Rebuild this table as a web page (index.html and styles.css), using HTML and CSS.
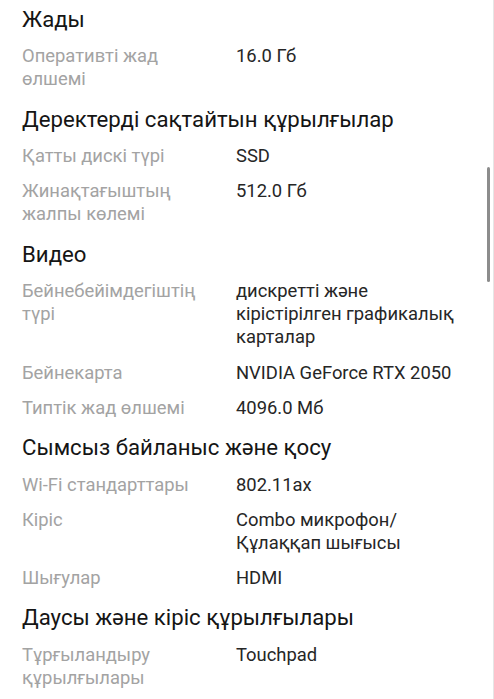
FILE: index.html
```html
<!DOCTYPE html>
<html lang="kk">
<head>
<meta charset="utf-8">
<title>Сипаттамалар</title>
<link rel="stylesheet" href="styles.css">
</head>
<body>
<main class="specs">
  <section class="section">
    <h2 class="heading">Жады</h2>
    <div class="row"><div class="label">Оперативті жад өлшемі</div><div class="value">16.0 Гб</div></div>
  </section>
  <section class="section">
    <h2 class="heading">Деректерді сақтайтын құрылғылар</h2>
    <div class="row"><div class="label">Қатты дискі түрі</div><div class="value">SSD</div></div>
    <div class="row"><div class="label">Жинақтағыштың жалпы көлемі</div><div class="value">512.0 Гб</div></div>
  </section>
  <section class="section">
    <h2 class="heading">Видео</h2>
    <div class="row"><div class="label">Бейнебейімдегіштің түрі</div><div class="value">дискретті және кірістірілген графикалық карталар</div></div>
    <div class="row"><div class="label">Бейнекарта</div><div class="value">NVIDIA GeForce RTX 2050</div></div>
    <div class="row"><div class="label">Типтік жад өлшемі</div><div class="value">4096.0 Мб</div></div>
  </section>
  <section class="section">
    <h2 class="heading">Сымсыз байланыс және қосу</h2>
    <div class="row"><div class="label">Wi-Fi стандарттары</div><div class="value">802.11ax</div></div>
    <div class="row"><div class="label">Кіріс</div><div class="value">Combo микрофон/ Құлаққап шығысы</div></div>
    <div class="row"><div class="label">Шығулар</div><div class="value">HDMI</div></div>
  </section>
  <section class="section">
    <h2 class="heading">Даусы және кіріс құрылғылары</h2>
    <div class="row"><div class="label">Тұрғыландыру құрылғылары</div><div class="value">Touchpad</div></div>
  </section>
</main>
<div class="scroll-edge"></div>
<div class="scroll-thumb"></div>
</body>
</html>
```
FILE: styles.css
```css
html, body {
  margin: 0;
  padding: 0;
  background: #ffffff;
  height: 100%;
  overflow: hidden;
}
body {
  font-family: Roboto, "Noto Sans", sans-serif;
  position: relative;
}
.specs {
  padding: 7px 22px 0 22px;
  display: flex;
  flex-direction: column;
  gap: 16.5px;
}
.section {
  display: flex;
  flex-direction: column;
  gap: 12.2px;
}
.heading {
  margin: 0 0 1.2px 0;
  font-size: 22.2px;
  font-weight: 400;
  line-height: 24px;
  color: #151515;
}
.row {
  display: grid;
  grid-template-columns: 200px 1fr;
  column-gap: 14px;
  font-size: 18.4px;
  line-height: 23px;
  padding-right: 8px;
}
.label {
  color: #a3a3a3;
}
.value {
  color: #262626;
}
.scroll-edge {
  position: absolute;
  top: 0;
  right: 0;
  width: 1px;
  height: 100%;
  background: #e6e6e6;
}
.scroll-thumb {
  position: absolute;
  top: 167px;
  left: 487px;
  width: 3px;
  height: 115px;
  border-radius: 2px;
  background: #8c8c8c;
}
```
